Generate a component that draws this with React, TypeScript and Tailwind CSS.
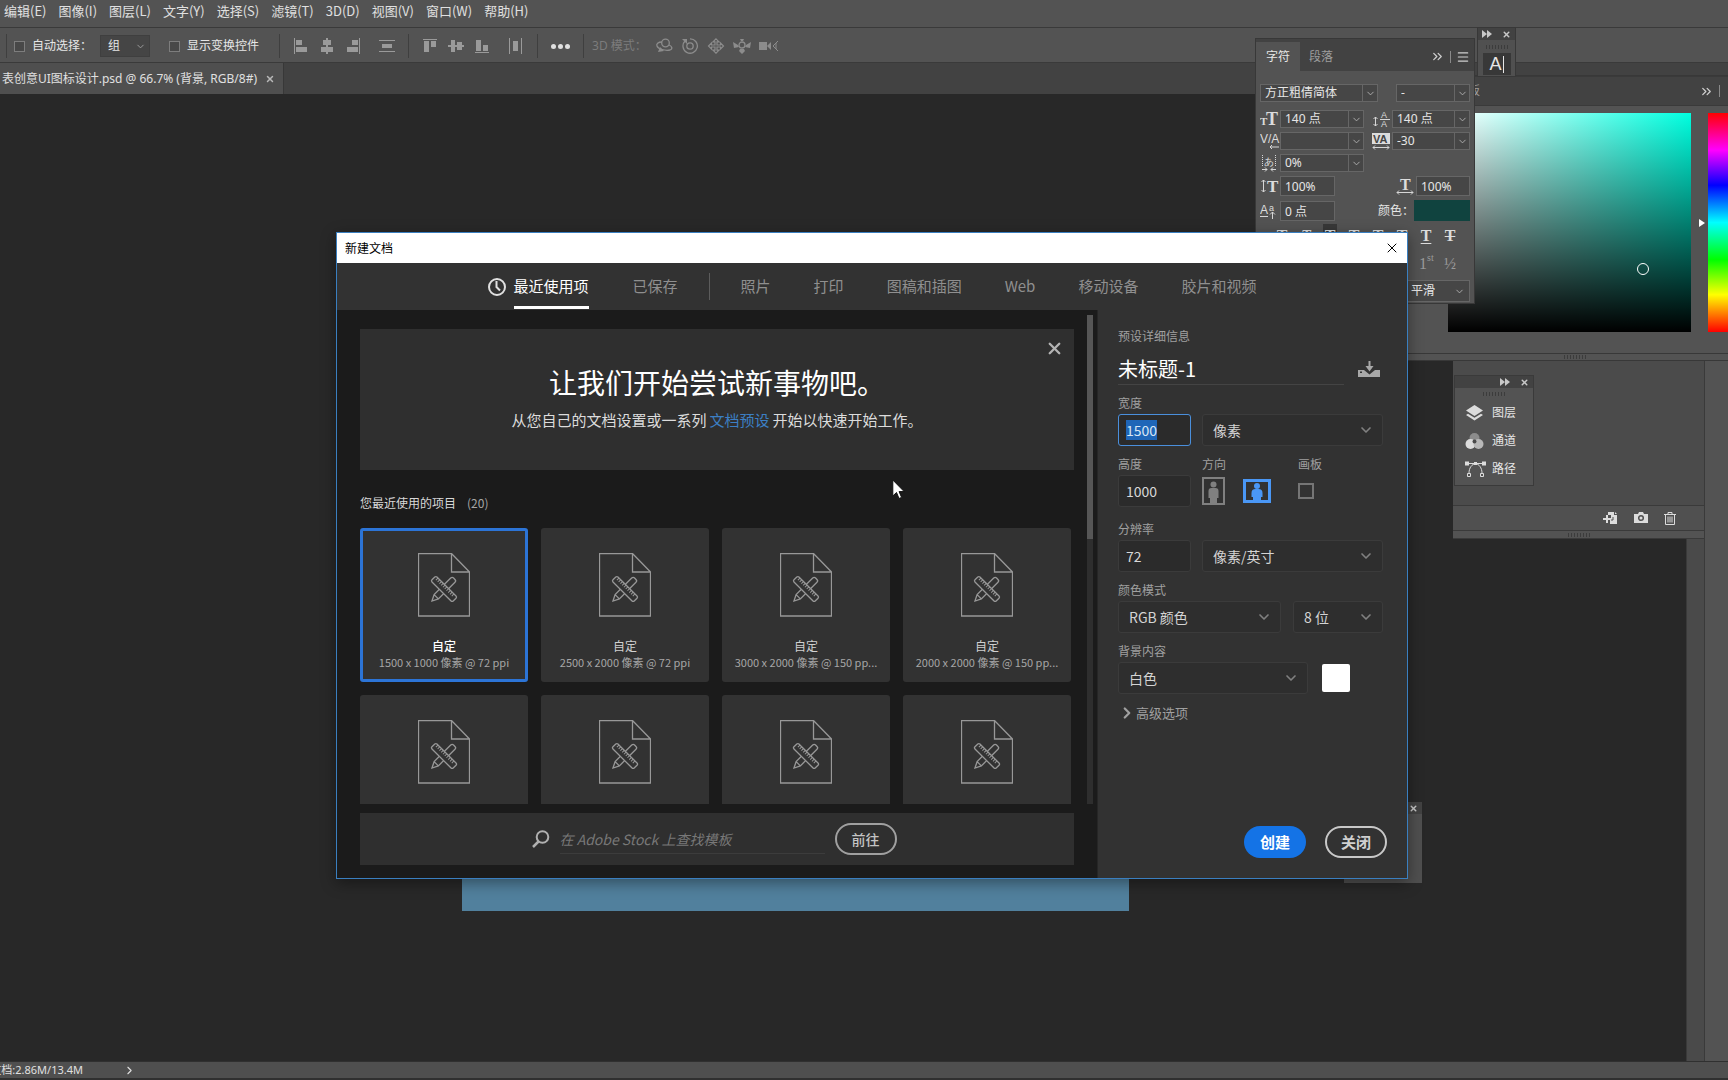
import React, { useEffect, useRef } from 'react';
import { ChevronDown, ChevronRight, ChevronsRight, Menu, X } from 'lucide-react';

const MENUS = ['编辑(E)', '图像(I)', '图层(L)', '文字(Y)', '选择(S)', '滤镜(T)', '3D(D)', '视图(V)', '窗口(W)', '帮助(H)'];

const CATEGORIES = ['照片', '打印', '图稿和插图', 'Web', '移动设备', '胶片和视频'];

// Only the first row has room for its caption, the second is clipped below the icon
const PRESETS = [
  { id: 1, size: '1500 x 1000 像素 @ 72 ppi' },
  { id: 2, size: '2500 x 2000 像素 @ 72 ppi' },
  { id: 3, size: '3000 x 2000 像素 @ 150 pp...' },
  { id: 4, size: '2000 x 2000 像素 @ 150 pp...' },
  { id: 5 },
  { id: 6 },
  { id: 7 },
  { id: 8 },
];

// --- Options bar ---

const ALIGN_ICONS = {
  left: 'M1 0h1v16H1zM3 2h6v5H3zM3 9h11v5H3z',
  centerX: 'M7 0h2v16H7zM4 2h8v5H4zM2 9h12v5H2z',
  right: 'M14 0h1v16h-1zM7 2h6v5H7zM2 9h11v5H2z',
  spreadY: 'M0 2h16v1H0zM3 6h10v4H3zM0 13h16v1H0z',
  top: 'M1 1h14v1H1zM2 3h5v11H2zM9 3h5v6H9z',
  centerY: 'M0 7h16v2H0zM3 2h4v12H3zM9 4h5v8H9z',
  bottom: 'M1 14h14v1H1zM2 2h5v11H2zM9 7h5v6H9z',
  spreadX: 'M1 0h1v16H1zM5 3h5v10H5zM13 0h1v16h-1z',
};

const AlignButton: React.FC<{ name: keyof typeof ALIGN_ICONS; label: string }> = ({ name, label }) => (
  <button aria-label={label} className="text-[#9a9a9a]">
    <svg width="16" height="16" viewBox="0 0 16 16" fill="currentColor" shapeRendering="crispEdges">
      <path d={ALIGN_ICONS[name]} />
    </svg>
  </button>
);

const Divider = () => <span className="h-6 w-px bg-[#3f3f3f]" />;

const OptionsBar = () => (
  <div className="flex h-[36px] items-center border-y border-[#3a3a3a] bg-[#535353] pl-[6px] pt-[2px] text-xs text-[#e6e6e6]">
    <Divider />
    <label className="ml-[7px] flex items-center gap-[7px]">
      <input type="checkbox" className="size-[11px] appearance-none border border-[#7d7d7d] bg-[#484848]" />
      自动选择：
    </label>
    <div className="ml-2 grid w-[50px] items-center border border-[#3f3f3f] bg-[#454545]">
      <select aria-label="自动选择对象" className="h-5 appearance-none pl-[7px] outline-none [grid-area:1/1]">
        <option>组</option>
      </select>
      <ChevronDown size={11} className="pointer-events-none mr-[3px] justify-self-end text-[#a0a0a0] [grid-area:1/1]" />
    </div>
    <div className="ml-[11px]"><Divider /></div>
    <label className="ml-2 flex items-center gap-[7px]">
      <input type="checkbox" className="size-[11px] appearance-none border border-[#7d7d7d] bg-[#484848]" />
      显示变换控件
    </label>
    <div className="ml-5 flex items-center gap-[13px]">
      <Divider />
      <div className="flex gap-[10px]">
        <AlignButton name="left" label="左对齐" />
        <AlignButton name="centerX" label="水平居中对齐" />
        <AlignButton name="right" label="右对齐" />
        <span className="ml-2 flex"><AlignButton name="spreadY" label="垂直分布" /></span>
      </div>
      <Divider />
      <div className="flex gap-[10px]">
        <AlignButton name="top" label="顶对齐" />
        <AlignButton name="centerY" label="垂直居中对齐" />
        <AlignButton name="bottom" label="底对齐" />
        <span className="ml-2 flex"><AlignButton name="spreadX" label="水平分布" /></span>
      </div>
      <Divider />
      <button aria-label="更多" className="flex gap-[2px]">
        <span className="size-[5px] rounded-full bg-[#e0e0e0]" />
        <span className="size-[5px] rounded-full bg-[#e0e0e0]" />
        <span className="size-[5px] rounded-full bg-[#e0e0e0]" />
      </button>
      <Divider />
    </div>
    <span className="ml-2 text-[#7c7c7c]">3D 模式：</span>
    <div className="ml-2 flex gap-[8px] text-[#8c8c8c]">
      <svg width="18" height="16" viewBox="0 0 18 16" fill="none" stroke="currentColor" strokeWidth="1.3">
        <circle cx="10.500" cy="5" r="3.800" />
        <path d="M7 4C3 4 1 6 2 8c1 3 8 5 13 4 3-1 2-4-1-5" />
        <path d="M3 14l6-1-4-4z" fill="currentColor" stroke="none" />
      </svg>
      <svg width="18" height="16" viewBox="0 0 18 16" fill="none" stroke="currentColor" strokeWidth="1.3">
        <circle cx="9" cy="8" r="3.200" />
        <path d="M4 3a7.200 7.200 0 1 0 5-2.200" />
        <path d="M1 1h5v5z" fill="currentColor" stroke="none" />
      </svg>
      <svg width="18" height="16" viewBox="0 0 18 16" fill="none" stroke="currentColor" strokeWidth="1.2">
        <path d="M9 .8l3 3h-2V7h3.500V5l3 3-3 3V9H10v3.200h2l-3 3-3-3h2V9H4.500v2l-3-3 3-3v2H8V3.800H6z" />
      </svg>
      <svg width="18" height="16" viewBox="0 0 18 16" fill="currentColor">
        <path d="M0 4l5 3 1 2-5 1zM18 4l-5 3-1 2 5 1zM7 11h4l1 2-3 3-3-3zM7 1h4l-1 2H8z" />
        <circle cx="9" cy="7" r="3" fill="none" stroke="currentColor" strokeWidth="1.3" />
      </svg>
      <svg width="20" height="16" viewBox="0 0 20 16" fill="currentColor">
        <path d="M0 4h8v8H0zM8 8l4-4v8z" />
        <path d="M19 3l-5 5 5 5M17 5v6" fill="none" stroke="currentColor" />
      </svg>
    </div>
  </div>
);

// --- Floating panels on the right side ---

const PanelBar: React.FC<{ children?: React.ReactNode }> = ({ children }) => (
  <div className="flex h-3 items-center justify-end gap-[10px] bg-[#424242] px-1 text-[#c8c8c8]">{children}</div>
);

const FastForward = () => (
  <svg width="10" height="8" viewBox="0 0 10 8" fill="currentColor">
    <path d="M0 0l5 4-5 4zM5 0l5 4-5 4z" />
  </svg>
);

const Grip = () => (
  <span className="block h-1 w-[22px] bg-[repeating-linear-gradient(90deg,#3c3c3c_0_1px,transparent_1px_3px)]" />
);

const Combo: React.FC<{ label: string; value: string; className: string }> = ({ label, value, className }) => (
  <div className={`flex h-[18px] border border-[#666] bg-[#464646] ${className}`}>
    <input aria-label={label} defaultValue={value} className="w-0 min-w-0 flex-1 pl-1 outline-none" />
    <button aria-label={`${label}选项`} className="grid w-[15px] place-items-center border-l border-[#666] text-[#b0b0b0]">
      <ChevronDown size={11} />
    </button>
  </div>
);

const CharIcon: React.FC<{ children: React.ReactNode }> = ({ children }) => (
  <svg width="20" height="18" viewBox="0 0 20 18" fill="none" stroke="#d6d6d6" className="shrink-0">{children}</svg>
);

const GLYPH = 'fill-[#dcdcdc] stroke-none font-["Liberation_Serif",serif] font-bold';
const GLYPH_SANS = 'fill-[#dcdcdc] stroke-none font-["Liberation_Sans",sans-serif]';

const CharacterPanel = () => (
  <section className="absolute right-[253px] top-[38px] h-[266px] w-[220px] border border-[#383838] bg-[#535353] text-xs text-[#e6e6e6]">
    <div className="flex h-8 items-stretch bg-[#424242] pt-[3px]">
      <button className="w-11 bg-[#535353]">字符</button>
      <button className="w-[42px] text-[#9d9d9d]">段落</button>
      <div className="ml-auto flex items-center gap-[5px] pr-1 text-[#d0d0d0]">
        <ChevronsRight size={15} />
        <span className="h-3 w-px bg-[#8a8a8a]" />
        <Menu size={14} />
      </div>
    </div>
    <div className="px-1 pt-[13px]">
      <div className="flex justify-between">
        <Combo label="字体" value="方正粗倩简体" className="w-[118px]" />
        <Combo label="字体样式" value="-" className="w-[74px]" />
      </div>
      <div className="mt-2 grid grid-cols-[20px_84px_8px_20px_78px] items-center gap-y-1">
        <CharIcon><text x="0" y="15" fontSize="11" className={GLYPH}>T</text><text x="6" y="15" fontSize="18" className={GLYPH}>T</text></CharIcon>
        <Combo label="字号" value="140 点" className="w-[84px]" />
        <span />
        <CharIcon>
          <text x="9" y="8" fontSize="9" className={GLYPH_SANS}>A</text>
          <text x="9" y="17" fontSize="9" className={GLYPH_SANS}>A</text>
          <path d="M8 9.500h10M3.500 7v9M1.500 9l2-2 2 2M1.500 14l2 2 2-2" />
        </CharIcon>
        <Combo label="行距" value="140 点" className="w-[78px]" />

        <CharIcon><text x="0" y="11" fontSize="12" className={GLYPH_SANS}>V/A</text><path d="M10 15h9M12 13l-2 2 2 2" /></CharIcon>
        <Combo label="字偶间距" value="" className="w-[84px]" />
        <span />
        <CharIcon>
          <rect x="0" y="1" width="18" height="11" fill="#dcdcdc" stroke="none" />
          <text x="1" y="11" fontSize="11" className='fill-[#444] stroke-none font-["Liberation_Sans",sans-serif] font-bold'>VA</text>
          <path d="M1 15.500h16M3 13.500l-2 2 2 2M15 13.500l2 2-2 2" />
        </CharIcon>
        <Combo label="字距" value="-30" className="w-[78px]" />

        <CharIcon>
          <text x="4" y="11" fontSize="10" className={GLYPH_SANS}>あ</text>
          <path d="M2.500 1v11M15.500 1v11" strokeDasharray="1 1" />
          <path d="M2 15.500h5M5 13.500l2 2-2 2M16 15.500h-5M13 13.500l-2 2 2 2" />
        </CharIcon>
        <Combo label="比例间距" value="0%" className="w-[84px]" />
      </div>
      <div className="mt-1 flex items-center">
        <CharIcon><path d="M3.500 3v12M1.500 5l2-2 2 2M1.500 13l2 2 2-2" /><text x="7" y="15" fontSize="17" className={GLYPH}>T</text></CharIcon>
        <input aria-label="垂直缩放" defaultValue="100%" className="h-5 w-[55px] border border-[#666] bg-[#464646] pl-1 outline-none" />
        <span className="flex-1" />
        <CharIcon><text x="4" y="13" fontSize="16" className={GLYPH}>T</text><path d="M1 15.500h16M3 13.500l-2 2 2 2M15 13.500l2 2-2 2" /></CharIcon>
        <input aria-label="水平缩放" defaultValue="100%" className="h-5 w-[54px] border border-[#666] bg-[#464646] pl-1 outline-none" />
      </div>
      <div className="mt-1 flex items-center">
        <CharIcon>
          <text x="0" y="12" fontSize="12" className={GLYPH_SANS}>A</text>
          <text x="9" y="9" fontSize="9" className={GLYPH_SANS}>a</text>
          <path d="M0 14.500h8M12.500 10v7M10 12.500l2.500-2.500 2.500 2.500" />
        </CharIcon>
        <input aria-label="基线偏移" defaultValue="0 点" className="h-5 w-[55px] border border-[#666] bg-[#464646] pl-1 outline-none" />
        <span className="flex-1" />
        <span>颜色：</span>
        <button aria-label="文本颜色" className="h-[21px] w-[56px] bg-[#10433f]" />
      </div>
      <div className="mt-[5px] flex h-5 items-center justify-end gap-[10px] pr-[13px] font-['Liberation_Serif',serif] text-base font-bold text-[#dcdcdc]">
        <button className="w-[14px]">T</button>
        <button className="w-[14px] italic">T</button>
        <button className="w-[14px] bg-[#383838]">T</button>
        <button className="w-[14px]">T</button>
        <button className="w-[14px]">T</button>
        <button className="w-[14px]">T</button>
        <button className="w-[14px] underline underline-offset-2">T</button>
        <button className="w-[14px] line-through">T</button>
      </div>
      <div className="mt-2 flex h-5 items-center justify-end gap-[10px] pr-[13px] font-['Liberation_Serif',serif] text-base text-[#9a9a9a]">
        <button className="flex w-[14px] items-start">1<span className="text-[10px]/[12px]">st</span></button>
        <button className="w-[14px]">½</button>
      </div>
      <div className="ml-auto mt-[6px] grid w-[85px] items-center border border-[#666] bg-[#464646]">
        <select aria-label="消除锯齿" className="h-5 appearance-none pl-[25px] outline-none [grid-area:1/1]">
          <option>平滑</option>
        </select>
        <ChevronDown size={11} className="pointer-events-none mr-1 justify-self-end text-[#b0b0b0] [grid-area:1/1]" />
      </div>
    </div>
  </section>
);

const ColorPanel = () => (
  <section className="absolute right-0 top-[75px] flex h-[286px] w-[328px] flex-col border-y border-[#383838] bg-[#535353]">
    <div className="flex h-[30px] items-center justify-end gap-[5px] border-y border-[#3a3a3a] bg-[#424242] pr-2 text-[#d0d0d0]">
      <span className="mr-[214px] text-xs text-[#9d9d9d]">色板</span>
      <ChevronsRight size={15} />
      <span className="h-3 w-px bg-[#8a8a8a]" />
    </div>
    <div className="mt-[7px] flex h-[219px] items-center justify-end">
      <div className="relative h-full w-[243px] bg-[linear-gradient(to_top,#000,transparent),linear-gradient(to_right,#fff,#00ffe0)]">
        <span className="absolute left-[189px] top-[150px] size-3 rounded-full border border-white" />
      </div>
      <span className="ml-2 border-y-4 border-l-[6px] border-y-transparent border-l-white" />
      <div className="ml-[3px] h-full w-5 bg-[linear-gradient(#f00,#f0f_17%,#00f_33%,#0ff_50%,#0f0_67%,#ff0_83%,#f00)]" />
    </div>
    <div className="mt-auto flex h-[7px] items-center justify-center border-t border-[#383838] pl-[22px]"><Grip /></div>
  </section>
);

const HistoryPanel = () => (
  <section className="absolute right-6 top-[361px] flex h-[178px] w-[251px] flex-col border-b border-[#3a3a3a] bg-[#4b4b4b]">
    <div className="mt-auto flex h-[26px] items-center justify-end gap-4 border-y border-[#3a3a3a] bg-[#505050] pr-7 text-[#dcdcdc]">
      <button aria-label="从当前状态创建新文档">
        <svg width="15" height="13" viewBox="0 0 15 13" fill="currentColor">
          <path d="M5 0h6v3h3v9H7V8H5v3H3V8H0V6h3V3h2v3h3V3H5zM12 0l2 2h-2z" />
          <path d="M8 8h2V5" fill="none" stroke="#505050" />
        </svg>
      </button>
      <button aria-label="创建新快照">
        <svg width="14" height="12" viewBox="0 0 14 12" fill="currentColor">
          <path d="M0 2h4l1-2h4l1 2h4v9H0z" />
          <circle cx="7" cy="6" r="2.300" fill="none" stroke="#505050" strokeWidth="1.500" />
        </svg>
      </button>
      <button aria-label="删除">
        <svg width="12" height="13" viewBox="0 0 12 13" fill="none" stroke="currentColor">
          <path d="M0 2.500h12M4 2V.5h4V2M1.500 3v9.500h9V3M4 4.500v6M6 4.500v6M8 4.500v6" />
        </svg>
      </button>
    </div>
    <div className="flex h-[7px] items-center justify-center bg-[#535353]"><Grip /></div>
  </section>
);

const LayersPanel = () => (
  <section className="absolute right-[194px] top-[375px] w-20 border border-[#3a3a3a] bg-[#535353] text-xs text-[#e6e6e6]">
    <PanelBar>
      <FastForward />
      <X size={9} strokeWidth={4} />
    </PanelBar>
    <div className="flex justify-center pt-1"><Grip /></div>
    <div className="flex flex-col gap-2 pb-[6px] pl-[10px] pt-[7px]">
      <button className="flex h-5 items-center gap-[8px]">
        <svg width="19" height="18" viewBox="0 0 19 18" fill="#dcdcdc">
          <path d="M9.500 1L18 6.500 9.500 12 1 6.500zM1 11l2-1.300 6.500 4 6.500-4L18 11l-8.500 5.500z" />
        </svg>
        图层
      </button>
      <button className="flex h-5 items-center gap-[8px]">
        <svg width="19" height="18" viewBox="0 0 19 18">
          <circle cx="9.500" cy="6" r="5" fill="#8c8c8c" />
          <circle cx="5.500" cy="12" r="5" fill="#dcdcdc" />
          <circle cx="13.500" cy="12" r="5" fill="#b8b8b8" />
          <circle cx="9.500" cy="9.500" r="2" fill="#4a4a4a" />
        </svg>
        通道
      </button>
      <button className="flex h-5 items-center gap-[6px]">
        <svg width="21" height="18" viewBox="0 0 21 18" fill="none" stroke="#dcdcdc">
          <path d="M2 3.500h17M4 13c0-5 3-9 6.500-9.500C14 4 17 8 17 13" />
          <path d="M0 1.500h4v4H0zM17 1.500h4v4h-4zM9 2h3v3H9z" fill="#dcdcdc" stroke="none" />
          <path d="M2.500 13.500h3v3h-3zM15.500 13.500h3v3h-3z" />
        </svg>
        路径
      </button>
    </div>
  </section>
);

const GlyphsDock = () => (
  <section className="absolute right-[212px] top-[27px] w-[39px] border border-[#383838] bg-[#505050]">
    <PanelBar>
      <FastForward />
      <X size={9} strokeWidth={4} />
    </PanelBar>
    <div className="flex justify-center pb-1 pt-[5px]"><Grip /></div>
    <button className="mx-auto mb-px flex h-[22px] w-[28px] items-center justify-center bg-[#383838] font-['Liberation_Sans',sans-serif] text-lg text-[#e6e6e6]">
      A<span className="ml-px h-[17px] w-px bg-[#e6e6e6]" />
    </button>
  </section>
);

// --- New document dialog ---

const PresetIcon = () => (
  <svg width="52" height="64" viewBox="0 0 52 64" fill="none" stroke="#989898">
    <path d="M.5.5h33L51.500 19v44H.5zM33.500.5V19h18" strokeWidth="1.300" />
    <g transform="translate(26 36) rotate(-45)" fill="#323232" strokeWidth="1.300">
      <path d="M-17 0l6-3H12.500a2 2 0 0 1 2 2v2a2 2 0 0 1-2 2H-11zM-11-3v6" />
    </g>
    <g transform="translate(26 36) rotate(45)" fill="#323232" strokeWidth="1.300">
      <rect x="-15" y="-3.500" width="30" height="7" rx="1.500" />
      <path d="M-12-3.500v3M-9.500-3.500v3M-7-3.500v3M-4.500-3.500v3M-2-3.500v3M.5-3.500v3M3-3.500v3M5.500-3.500v3M8-3.500v3M10.500-3.500v3" strokeWidth="1" />
    </g>
  </svg>
);

const PresetCard: React.FC<{ size?: string; selected: boolean }> = ({ size, selected }) => (
  <button
    aria-label={size ? undefined : '自定'}
    className={`flex h-[154px] flex-col items-center rounded-[3px] border-[3px] bg-[#323232] pt-[22px] ${
      selected ? 'border-[#2c74d6]' : 'border-[#323232]'
    }`}
  >
    <PresetIcon />
    {size && (
      <>
        <span className={`mt-5 text-xs/[18px] ${selected ? 'font-medium text-white' : 'text-[#d0d0d0]'}`}>自定</span>
        <span className="whitespace-nowrap text-[11px]/[14px] text-[#a6a6a6]">{size}</span>
      </>
    )}
  </button>
);

const Dropdown: React.FC<{ id: string; value: string; className: string }> = ({ id, value, className }) => (
  <div className={`grid h-8 items-center rounded-[3px] border border-[#3b3b3b] bg-[#2e2e2e] ${className}`}>
    <select id={id} aria-label={value} className="h-full w-full appearance-none pl-[10px] text-sm text-[#d4d4d4] outline-none [grid-area:1/1]">
      <option>{value}</option>
    </select>
    <ChevronDown size={16} strokeWidth={2.5} className="pointer-events-none mr-2 justify-self-end text-[#808080] [grid-area:1/1]" />
  </div>
);

const FIELD = 'h-8 w-[73px] rounded-[3px] border border-[#3b3b3b] bg-[#2b2b2b] pl-[7px] text-sm text-[#d8d8d8] outline-none';

const PresetDetails = () => {
  const widthRef = useRef<HTMLInputElement>(null);

  // The width field opens focused with its value selected
  useEffect(() => {
    widthRef.current?.focus();
    widthRef.current?.select();
  }, []);

  return (
    <form className="flex w-[310px] flex-col border-l border-[#262626] bg-[#323232] px-5 pb-5 pt-[18px] text-xs/4 text-[#a0a0a0]">
      <span>预设详细信息</span>
      <div className="mt-[9px] flex items-center justify-between pr-[7px]">
        <input aria-label="文档名称" defaultValue="未标题-1" className="h-8 w-[226px] border-b border-[#444] text-xl text-white outline-none" />
        <button type="button" aria-label="保存预设">
          <svg width="22" height="16" viewBox="0 0 22 16" fill="#a8a8a8">
            <path d="M0 9h6l5.500 4.500L17 9h5v7H0z" />
            <path d="M10.500 0h2v5h3l-4 5.500-4-5.500h3z" />
            <path d="M2 10.500h2v1.500H2z" fill="#323232" />
          </svg>
        </button>
      </div>

      <label htmlFor="doc-width" className="mt-[10px]">宽度</label>
      <div className="mt-[3px] flex gap-[11px]">
        <input
          id="doc-width"
          ref={widthRef}
          defaultValue="1500"
          className="h-8 w-[73px] rounded-[3px] border border-[#4a8fdc] bg-[#2b2b2b] pl-[7px] text-sm text-[#d8d8d8] outline-none selection:bg-[#1f66b8] selection:text-[#d8e6f5]"
        />
        <Dropdown id="unit" value="像素" className="w-[181px]" />
      </div>

      <div className="mt-[10px] grid grid-cols-[84px_96px_auto]">
        <label htmlFor="doc-height">高度</label>
        <span>方向</span>
        <label htmlFor="artboard">画板</label>
      </div>
      <div className="mt-[3px] grid grid-cols-[84px_96px_auto] items-center">
        <input id="doc-height" defaultValue="1000" className={FIELD} />
        <div className="flex items-center gap-[18px]">
          <button type="button" aria-label="纵向">
            <svg width="23" height="28" viewBox="0 0 23 28" fill="#808080">
              <path d="M0 0h23v28H0zM2 2v24h19V2z" fillRule="evenodd" />
              <circle cx="11.500" cy="7.500" r="3" />
              <path d="M6.500 14a3 3 0 0 1 3-3h4a3 3 0 0 1 3 3v7H15v5H8v-5H6.500z" />
            </svg>
          </button>
          <button type="button" aria-label="横向">
            <svg width="28" height="24" viewBox="0 0 28 24" fill="#4a97f5">
              <path d="M0 0h28v24H0zM3 3v18h22V3z" fillRule="evenodd" />
              <circle cx="14" cy="7" r="3" />
              <path d="M8.500 14a4 4 0 0 1 4-4h3a4 4 0 0 1 4 4v4H18v3h-8v-3H8.500z" />
            </svg>
          </button>
        </div>
        <input id="artboard" type="checkbox" className="size-4 appearance-none border-2 border-[#757575]" />
      </div>

      <label htmlFor="resolution" className="mt-[14px]">分辨率</label>
      <div className="mt-[3px] flex gap-[11px]">
        <input id="resolution" defaultValue="72" className={FIELD} />
        <Dropdown id="resolution-unit" value="像素/英寸" className="w-[181px]" />
      </div>

      <label htmlFor="color-mode" className="mt-[10px]">颜色模式</label>
      <div className="mt-[3px] flex gap-3">
        <Dropdown id="color-mode" value="RGB 颜色" className="w-[163px]" />
        <Dropdown id="bit-depth" value="8 位" className="w-[90px]" />
      </div>

      <label htmlFor="background" className="mt-[10px]">背景内容</label>
      <div className="mt-[3px] flex items-center gap-[14px]">
        <Dropdown id="background" value="白色" className="w-[190px]" />
        <button type="button" aria-label="背景颜色" className="size-7 rounded-[2px] bg-white" />
      </div>

      <button type="button" className="mt-[9px] flex items-center self-start text-[13px]/5">
        <ChevronRight size={18} strokeWidth={3} />
        高级选项
      </button>

      <div className="mt-auto flex justify-end gap-[19px] text-[15px]">
        <button type="button" className="h-8 w-[62px] rounded-full bg-[#1473e6] font-bold text-white">创建</button>
        <button type="button" className="h-8 w-[62px] rounded-full border-2 border-[#c8c8c8] font-bold text-[#d0d0d0]">关闭</button>
      </div>
    </form>
  );
};

const NewDocumentDialog = () => (
  <div
    role="dialog"
    aria-label="新建文档"
    className="absolute left-[336px] top-[232px] flex w-[1072px] flex-col border border-[#3a7fc0] bg-[#1b1b1b] font-['Noto_Sans_CJK_SC',sans-serif] shadow-[0_4px_14px_rgba(0,0,0,0.4)]"
  >
    <div className="flex h-[30px] items-center justify-between bg-white pb-px pl-2 pr-[7px] text-xs text-black">
      <span>新建文档</span>
      <button aria-label="关闭窗口"><X size={16} strokeWidth={1.5} /></button>
    </div>

    <nav className="flex h-[47px] items-stretch justify-center bg-[#323232] text-[15px] text-[#8f8f8f]">
      <button className="flex items-center gap-2 text-white">
        <svg width="18" height="18" viewBox="0 0 18 18" fill="none" stroke="#e0e0e0" strokeWidth="2">
          <circle cx="9" cy="9" r="8" />
          <path d="M8.500 3v6l3.500 3.500" />
        </svg>
        <span className="mb-px flex h-[46px] items-center border-b-[3px] border-white pt-[3px]">最近使用项</span>
      </button>
      <button className="ml-11">已保存</button>
      <span className="mx-[31px] my-[10px] w-px bg-[#5c5c5c]" />
      <div className="flex gap-[43px]">
        {CATEGORIES.map((c) => <button key={c}>{c}</button>)}
      </div>
    </nav>

    <div className="flex">
      <main className="flex min-w-0 flex-1 flex-col pb-[13px] pl-[23px]">
        <div className="flex">
          <div className="w-[714px] pt-[19px]">
            <div className="relative flex h-[141px] flex-col items-center bg-[#2f2f2f] pt-[33px]">
              <h1 className="text-[28px]/10 text-white">让我们开始尝试新事物吧。</h1>
              <p className="mt-[6px] text-[15px]/6 text-[#dcdcdc]">
                从您自己的文档设置或一系列<a href="#presets" className="mx-[3px] text-[#3c7fc4]">文档预设</a>开始以快速开始工作。
              </p>
              <button aria-label="关闭提示" className="absolute right-[10px] top-[10px] text-[#b4b4b4]">
                <X size={19} strokeWidth={3} />
              </button>
            </div>
            <h2 className="mt-[23px] text-xs/5 text-[#d8d8d8]">
              您最近使用的项目<span className="ml-[11px] text-[#a6a6a6]">(20)</span>
            </h2>
            <div id="presets" className="mr-[3px] mt-[15px] grid h-[276px] auto-rows-max grid-cols-4 gap-[13px] overflow-hidden">
              {PRESETS.map((p) => <PresetCard key={p.id} size={p.size} selected={p.id === 1} />)}
            </div>
          </div>
          <div className="ml-[13px] mt-[5px] w-[6px] self-stretch bg-[#2e2e2e]">
            <div className="h-[224px] bg-[#565656]" />
          </div>
        </div>

        <div className="mt-[9px] flex h-[52px] w-[714px] items-center justify-center bg-[#2f2f2f] pr-[6px]">
          <svg width="18" height="18" viewBox="0 0 18 18" fill="none" stroke="#b0b0b0" strokeWidth="2">
            <circle cx="10.500" cy="7" r="5.800" />
            <path d="M6.500 11.500L1 17" strokeWidth="2.500" />
          </svg>
          <input
            aria-label="在 Adobe Stock 上查找模板"
            placeholder="在 Adobe Stock 上查找模板"
            className="ml-[10px] h-[30px] w-[265px] border-b border-[#3c3c3c] text-sm italic outline-none placeholder:text-[#787878]"
          />
          <button className="ml-[10px] h-8 w-[62px] rounded-full border-2 border-[#a0a0a0] text-sm font-medium text-[#c4c4c4]">前往</button>
        </div>
      </main>
      <PresetDetails />
    </div>
  </div>
);

const App: React.FC = () => (
  <div className="relative flex min-h-screen flex-col overflow-hidden bg-[#282828] font-['Noto_Sans','Noto_Sans_CJK_SC',sans-serif] text-[#e0e0e0]">
    <nav className="flex h-[27px] items-center gap-3 bg-[#535353] pb-[5px] pl-1 font-['Noto_Sans_CJK_SC',sans-serif] text-[13px]">
      {MENUS.map((m) => <button key={m}>{m}</button>)}
    </nav>
    <OptionsBar />
    <div className="flex h-[31px] bg-[#424242]">
      <div className="flex w-[284px] items-center justify-end gap-2 overflow-hidden whitespace-nowrap border-r border-[#383838] bg-[#4f4f4f] pr-2 text-xs">
        <span>表创意UI图标设计.psd @ 66.7% (背景, RGB/8#)</span>
        <button aria-label="关闭文档" className="text-[#b8b8b8]"><X size={10} strokeWidth={3.5} /></button>
      </div>
    </div>

    <div className="flex flex-1">
      <div className="relative flex-1">
        <div className="absolute left-[462px] top-[400px] h-[417px] w-[667px] bg-[#51809d]" />
      </div>
      <div className="w-[18px] border-l border-[#3a3a3a] bg-[#4a4a4a]" />
      <div className="w-6 border-l border-[#3a3a3a] bg-[#535353]" />
    </div>
    <footer className="flex h-[19px] items-center gap-10 border-b-2 border-t border-[#303030] bg-[#4f4f4f] text-[11px]">
      <span className="flex w-[83px] justify-end overflow-hidden whitespace-nowrap">文档:2.86M/13.4M</span>
      <ChevronRight size={13} />
    </footer>

    <section className="absolute right-[306px] top-[802px] h-[81px] w-[78px] bg-[#4f4f4f]">
      <PanelBar><X size={9} strokeWidth={4} /></PanelBar>
    </section>
    <ColorPanel />
    <HistoryPanel />
    <LayersPanel />
    <GlyphsDock />
    <CharacterPanel />
    <NewDocumentDialog />

    <svg width="14" height="22" viewBox="0 0 14 22" className="absolute left-[892px] top-[479px]" fill="#fff" stroke="#111">
      <path d="M.8 1v16l3.700-3.500 2.500 6 2.600-1.100-2.500-5.800h5.100z" />
    </svg>
  </div>
);

export default App;
